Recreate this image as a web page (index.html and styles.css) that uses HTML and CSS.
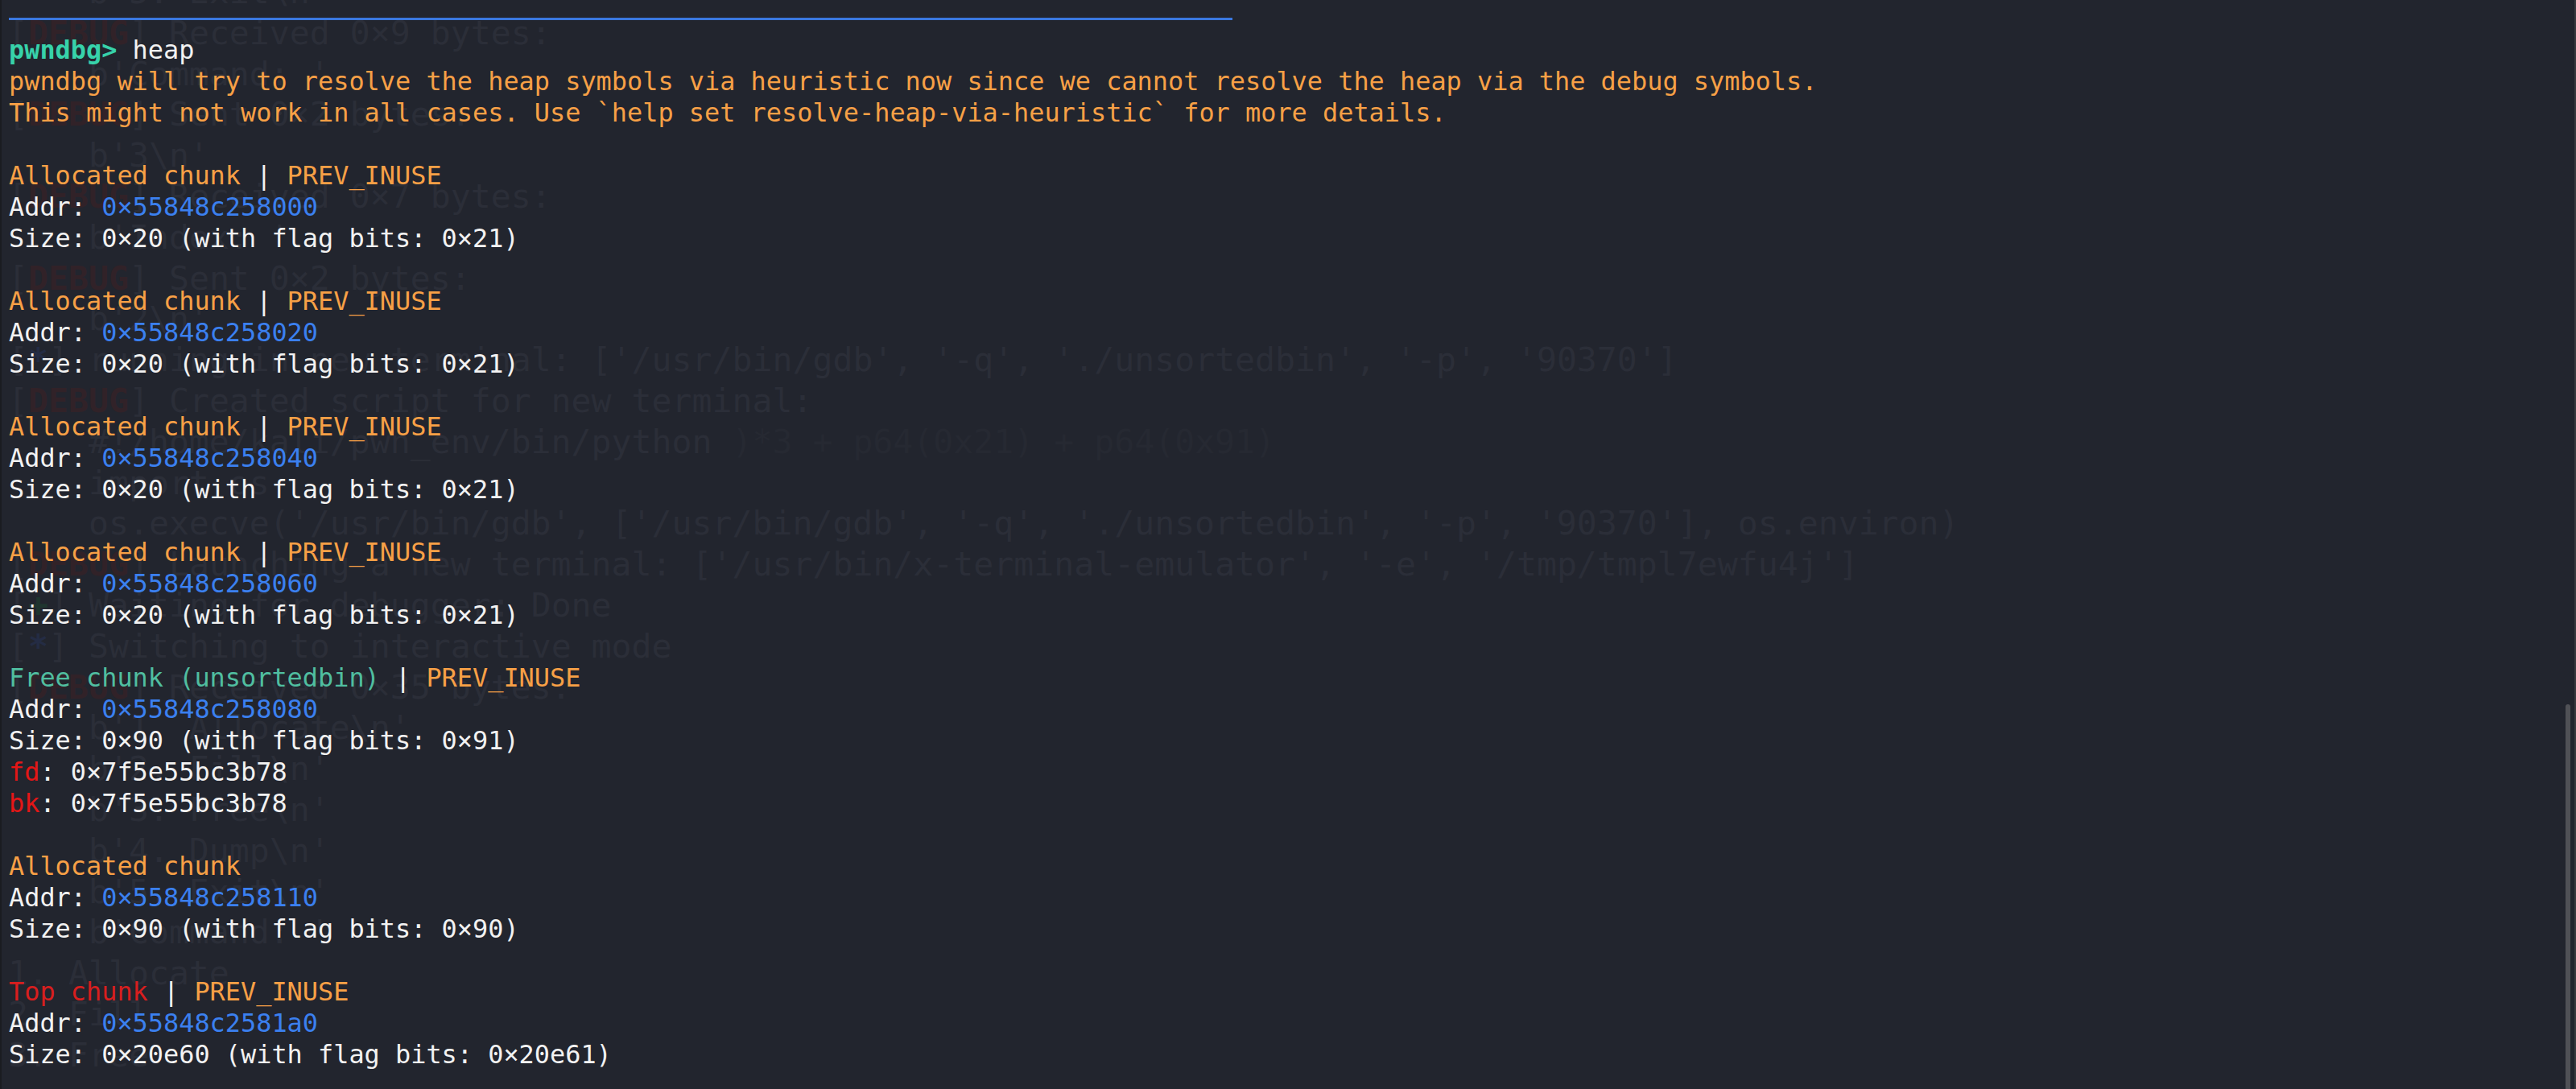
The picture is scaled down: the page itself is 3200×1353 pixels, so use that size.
FILE: index.html
```html
<!DOCTYPE html>
<html lang="en">
<head>
<meta charset="utf-8">
<title>pwndbg heap</title>
<link rel="stylesheet" href="styles.css">
</head>
<body>
<div class="screen">
<pre class="ghost" aria-hidden="true">    b'5. Exit\n'
[<span class="g-dbg">DEBUG</span>] Received 0×9 bytes:
    b'Command: '
[<span class="g-dbg">DEBUG</span>] Sent 0×2 bytes:
    b'3\n'
[<span class="g-dbg">DEBUG</span>] Received 0×7 bytes:
    b'Index: '
[<span class="g-dbg">DEBUG</span>] Sent 0×2 bytes:
    b'2\n'
[<span class="g-info">*</span>] running in new terminal: ['/usr/bin/gdb', '-q', './unsortedbin', '-p', '90370']
[<span class="g-dbg">DEBUG</span>] Created script for new terminal:
    #!/home/kali/pwn_env/bin/python <span class="g-far">)*3 + p64(0x21) + p64(0x91)</span>
    import os
    os.execve('/usr/bin/gdb', ['/usr/bin/gdb', '-q', './unsortedbin', '-p', '90370'], os.environ)
[<span class="g-dbg">DEBUG</span>] Launching a new terminal: ['/usr/bin/x-terminal-emulator', '-e', '/tmp/tmpl7ewfu4j']
[<span class="g-ok">+</span>] Waiting for debugger: Done
[<span class="g-info">*</span>] Switching to interactive mode
[<span class="g-dbg">DEBUG</span>] Received 0×35 bytes:
    b'1. Allocate\n'
    b'2. Fill\n'
    b'3. Free\n'
    b'4. Dump\n'
    b'5. Exit\n'
    b'Command: '
1. Allocate
2. Fill
3. Free</pre>
<div class="term">
<div class="rule"></div>
<pre class="out"><span class="prompt">pwndbg&gt;</span> heap
<span class="ora">pwndbg will try to resolve the heap symbols via heuristic now since we cannot resolve the heap via the debug symbols.</span>
<span class="ora">This might not work in all cases. Use `help set resolve-heap-via-heuristic` for more details.</span>

<span class="ora">Allocated chunk</span> | <span class="ora">PREV_INUSE</span>
Addr: <span class="addr">0×55848c258000</span>
Size: 0×20 (with flag bits: 0×21)

<span class="ora">Allocated chunk</span> | <span class="ora">PREV_INUSE</span>
Addr: <span class="addr">0×55848c258020</span>
Size: 0×20 (with flag bits: 0×21)

<span class="ora">Allocated chunk</span> | <span class="ora">PREV_INUSE</span>
Addr: <span class="addr">0×55848c258040</span>
Size: 0×20 (with flag bits: 0×21)

<span class="ora">Allocated chunk</span> | <span class="ora">PREV_INUSE</span>
Addr: <span class="addr">0×55848c258060</span>
Size: 0×20 (with flag bits: 0×21)

<span class="free">Free chunk (unsortedbin)</span> | <span class="ora">PREV_INUSE</span>
Addr: <span class="addr">0×55848c258080</span>
Size: 0×90 (with flag bits: 0×91)
<span class="ptr">fd</span>: 0×7f5e55bc3b78
<span class="ptr">bk</span>: 0×7f5e55bc3b78

<span class="ora">Allocated chunk</span>
Addr: <span class="addr">0×55848c258110</span>
Size: 0×90 (with flag bits: 0×90)

<span class="top">Top chunk</span> | <span class="ora">PREV_INUSE</span>
Addr: <span class="addr">0×55848c2581a0</span>
Size: 0×20e60 (with flag bits: 0×20e61)</pre>
</div>
<div class="scrollbar"></div>
</div>
</body>
</html>
```
FILE: styles.css
```css
html, body {
  margin: 0;
  padding: 0;
  background: #22252e;
}
.screen {
  position: relative;
  width: 3200px;
  height: 1353px;
  box-sizing: border-box;
  overflow: hidden;
  background: #22252e;
  border-left: 2px solid #1a1c21;
  border-right: 2px solid #393a3f;
}
.ghost {
  position: absolute;
  left: 8px;
  top: -35px;
  margin: 0;
  font-family: "DejaVu Sans Mono", monospace;
  font-size: 41.5px;
  line-height: 50.8px;
  color: #2b2e38;
  white-space: pre;
}
.g-dbg { color: #312228; font-weight: bold; }
.g-info { color: #242c44; font-weight: bold; }
.g-ok { color: #1f352f; font-weight: bold; }
.g-far { color: #262932; }
.term {
  position: relative;
  z-index: 1;
  padding-left: 9px;
}
.rule {
  margin-top: 22px;
  width: 1520px;
  height: 3px;
  background: #3a78e0;
}
.out {
  margin: 18px 0 0 0;
  font-family: "DejaVu Sans Mono", monospace;
  font-size: 31.9px;
  line-height: 39px;
  color: #f2f2f2;
  white-space: pre;
}
.prompt { color: #37d2aa; font-weight: bold; }
.ora { color: #f7a046; }
.addr { color: #3b80f0; }
.free { color: #50bea0; }
.ptr { color: #e41616; }
.top { color: #d81e1e; }
.scrollbar {
  position: absolute;
  right: 5px;
  top: 875px;
  width: 6px;
  height: 500px;
  border-radius: 3px;
  background: #505156;
}
```
